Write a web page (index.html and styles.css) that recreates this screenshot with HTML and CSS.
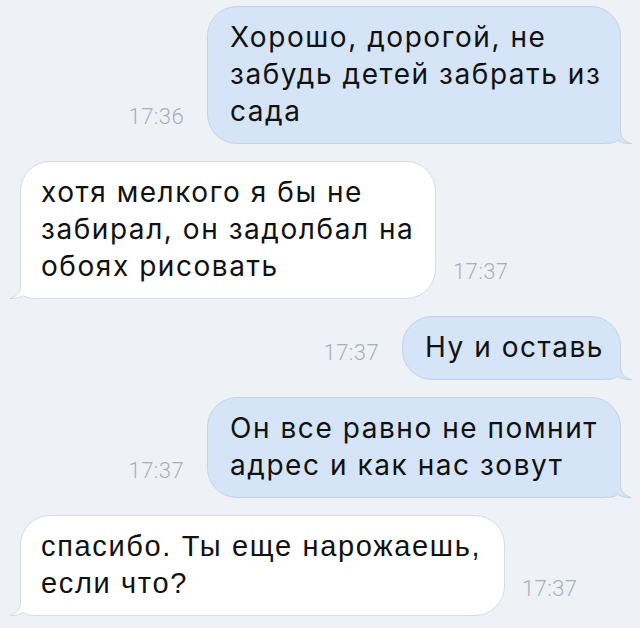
FILE: index.html
```html
<!DOCTYPE html>
<html lang="ru">
<head>
<meta charset="utf-8">
<title>Chat</title>
<link rel="stylesheet" href="styles.css">
</head>
<body>
<div class="chat">
  <div class="row out">
    <span class="time">17:36</span>
    <div class="bubble bubble-out w-414">Хорошо, дорогой, не<br>забудь детей забрать из<br>сада<svg class="tail tail-out" width="24" height="22" viewBox="0 0 24 22"><path class="tail-fill" d="M0,0 H12.5 V9 C12.5,15 16,19.5 23.5,21.5 C17.5,22 13,20.5 9.5,18.5 C6.5,20.5 3.5,21.5 0,21.5 Z"/><path class="tail-stroke" d="M12.5,0 V9 C12.5,15 16,19.5 23.5,21.5 C17.5,22 13,20.5 9.5,18.5 C6.5,20.5 3.5,21.5 0,21.5"/></svg></div>
  </div>
  <div class="row in">
    <div class="bubble bubble-in w-416">хотя мелкого я бы не<br>забирал, он задолбал на<br>обоях рисовать<svg class="tail tail-in" width="24" height="22" viewBox="0 0 24 22"><path class="tail-fill" d="M0,0 H12.5 V9 C12.5,15 16,19.5 23.5,21.5 C17.5,22 13,20.5 9.5,18.5 C6.5,20.5 3.5,21.5 0,21.5 Z"/><path class="tail-stroke" d="M12.5,0 V9 C12.5,15 16,19.5 23.5,21.5 C17.5,22 13,20.5 9.5,18.5 C6.5,20.5 3.5,21.5 0,21.5"/></svg></div>
    <span class="time">17:37</span>
  </div>
  <div class="row out">
    <span class="time">17:37</span>
    <div class="bubble bubble-out w-219">Ну и оставь<svg class="tail tail-out" width="24" height="22" viewBox="0 0 24 22"><path class="tail-fill" d="M0,0 H12.5 V9 C12.5,15 16,19.5 23.5,21.5 C17.5,22 13,20.5 9.5,18.5 C6.5,20.5 3.5,21.5 0,21.5 Z"/><path class="tail-stroke" d="M12.5,0 V9 C12.5,15 16,19.5 23.5,21.5 C17.5,22 13,20.5 9.5,18.5 C6.5,20.5 3.5,21.5 0,21.5"/></svg></div>
  </div>
  <div class="row out">
    <span class="time">17:37</span>
    <div class="bubble bubble-out w-414">Он все равно не помнит<br>адрес и как нас зовут<svg class="tail tail-out" width="24" height="22" viewBox="0 0 24 22"><path class="tail-fill" d="M0,0 H12.5 V9 C12.5,15 16,19.5 23.5,21.5 C17.5,22 13,20.5 9.5,18.5 C6.5,20.5 3.5,21.5 0,21.5 Z"/><path class="tail-stroke" d="M12.5,0 V9 C12.5,15 16,19.5 23.5,21.5 C17.5,22 13,20.5 9.5,18.5 C6.5,20.5 3.5,21.5 0,21.5"/></svg></div>
  </div>
  <div class="row in">
    <div class="bubble bubble-in bubble-narrow w-485">спасибо. Ты еще нарожаешь,<br>если что?<svg class="tail tail-in" width="24" height="22" viewBox="0 0 24 22"><path class="tail-fill" d="M0,0 H12.5 V9 C12.5,15 16,19.5 23.5,21.5 C17.5,22 13,20.5 9.5,18.5 C6.5,20.5 3.5,21.5 0,21.5 Z"/><path class="tail-stroke" d="M12.5,0 V9 C12.5,15 16,19.5 23.5,21.5 C17.5,22 13,20.5 9.5,18.5 C6.5,20.5 3.5,21.5 0,21.5"/></svg></div>
    <span class="time">17:37</span>
  </div>
</div>
</body>
</html>
```
FILE: styles.css
```css
html, body {
  margin: 0;
  padding: 0;
}
body {
  background: #eef2f7;
  font-family: Inter, "Liberation Sans", Arial, sans-serif;
  width: 640px;
  height: 628px;
  overflow: hidden;
}
.chat {
  display: flex;
  flex-direction: column;
  gap: 17px;
  padding: 6px 19px 0 20px;
}
.row {
  display: flex;
  align-items: flex-end;
}
.row.out {
  justify-content: flex-end;
  gap: 23px;
}
.row.in {
  justify-content: flex-start;
  gap: 17px;
}
.row.first {
  margin-bottom: 2px;
}
.bubble {
  position: relative;
  box-sizing: border-box;
  border: 1px solid;
  border-radius: 30px;
  padding: 12px 18px 13px 22px;
  font-family: Inter, "Liberation Sans", Arial, sans-serif;
  font-size: 28px;
  line-height: 37px;
  letter-spacing: 1.55px;
  white-space: nowrap;
  color: #111;
}
.bubble.bubble-narrow {
  font-family: "Liberation Sans", Arial, sans-serif;
  font-size: 29px;
  letter-spacing: 1.65px;
}
.bubble-out {
  background: #d5e5f7;
  border-color: #c4d4e7;
  border-bottom-right-radius: 16px;
}
.bubble-in {
  background: #ffffff;
  border-color: #d6dce3;
  border-bottom-left-radius: 16px;
  padding-left: 20px;
}
.w-414 { width: 414px; }
.w-416 { width: 416px; }
.w-219 { width: 219px; }
.w-485 { width: 485px; }
.tail {
  position: absolute;
  bottom: -1px;
  display: block;
}
.tail-out {
  right: -12px;
}
.tail-in {
  left: -12px;
  transform: scaleX(-1);
}
.tail-fill {
  stroke: none;
}
.tail-stroke {
  fill: none;
  stroke-width: 1;
}
.tail-out .tail-fill { fill: #d5e5f7; }
.tail-out .tail-stroke { stroke: #c4d4e7; }
.tail-in .tail-fill { fill: #ffffff; }
.tail-in .tail-stroke { stroke: #d6dce3; }
.time {
  font-family: Roboto, "Liberation Sans", sans-serif;
  font-weight: 300;
  font-size: 22px;
  letter-spacing: 0.4px;
  line-height: 20px;
  color: #a9afb7;
  margin-bottom: 17px;
  white-space: nowrap;
}
```
